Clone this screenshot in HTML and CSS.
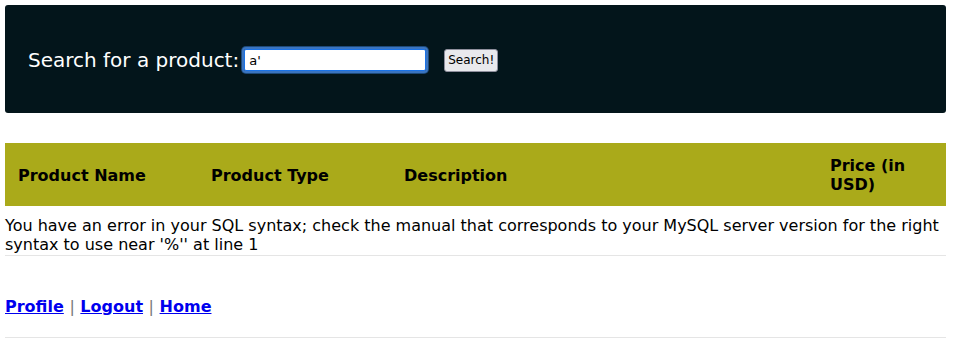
FILE: index.html
```html
<!DOCTYPE html>
<html>
<head>
<meta charset="utf-8">
<link rel="stylesheet" href="styles.css">
</head>
<body>
<div class="search-bar">
  <form class="search-form">
    <label class="search-label">Search for a product:</label>
    <input class="search-input" type="text" value="a'">
    <button class="search-btn" type="button">Search!</button>
  </form>
</div>
<table class="products">
  <colgroup>
    <col class="col-name">
    <col class="col-type">
    <col class="col-desc">
    <col class="col-price">
  </colgroup>
  <thead>
    <tr>
      <th>Product Name</th>
      <th>Product Type</th>
      <th>Description</th>
      <th>Price (in USD)</th>
    </tr>
  </thead>
</table>
<p class="error">You have an error in your SQL syntax; check the manual that corresponds to your MySQL server version for the right syntax to use near '%'' at line 1</p>
<hr class="rule">
<div class="nav">
  <a href="#">Profile</a> <span class="sep">|</span> <a href="#">Logout</a> <span class="sep">|</span> <a href="#">Home</a>
</div>
<hr class="rule">
</body>
</html>
```
FILE: styles.css
```css
html, body {
  margin: 0;
  padding: 0;
  background: #ffffff;
}
body {
  padding: 5px 9px 0 5px;
  font-family: "DejaVu Sans", sans-serif;
  font-size: 16px;
  color: #000;
}
.search-bar {
  background: #03151b;
  border-radius: 3px;
  height: 108px;
  display: flex;
  align-items: center;
  padding: 2px 0 0 23px;
  box-sizing: border-box;
}
.search-form {
  display: flex;
  align-items: center;
}
.search-label {
  color: #ffffff;
  font-size: 20px;
  margin-right: 3px;
}
.search-input {
  width: 182px;
  height: 22px;
  box-sizing: border-box;
  border: 1px solid #1a73e8;
  border-radius: 2px;
  outline: 2px solid #3a74c0;
  outline-offset: 0;
  box-shadow: 0 0 0 3px #1e4a7a;
  padding: 1px 4px;
  font-family: "DejaVu Sans", sans-serif;
  font-size: 13px;
  margin: 0 18px 0 2px;
  background: #fff;
}
.search-btn {
  font-family: "DejaVu Sans", sans-serif;
  font-size: 12px;
  height: 23px;
  padding: 0 3px;
  border: 1px solid #8f8f9d;
  border-radius: 3px;
  background: #e9e9ed;
  color: #000;
}
.products {
  width: 100%;
  table-layout: fixed;
  border-collapse: collapse;
  background: #aaaa1a;
  margin-top: 30px;
}
.products th {
  text-align: left;
  font-weight: bold;
  padding: 13px 13px 12px 13px;
  line-height: 19px;
  vertical-align: middle;
}
.col-name, .col-type { width: 193px; }
.col-price { width: 129px; }
.error {
  margin: 10px 0 0 0;
  line-height: 19px;
  font-size: 16px;
}
.rule {
  border: 0;
  border-top: 1px solid #e5e5e5;
  margin: 1px 0 0 0;
}
.nav {
  padding: 41px 0 20px 0;
  font-weight: bold;
  line-height: 19px;
}
.nav a {
  color: #0000ee;
  text-decoration: underline;
}
.sep {
  color: #777;
  font-weight: normal;
}
```
